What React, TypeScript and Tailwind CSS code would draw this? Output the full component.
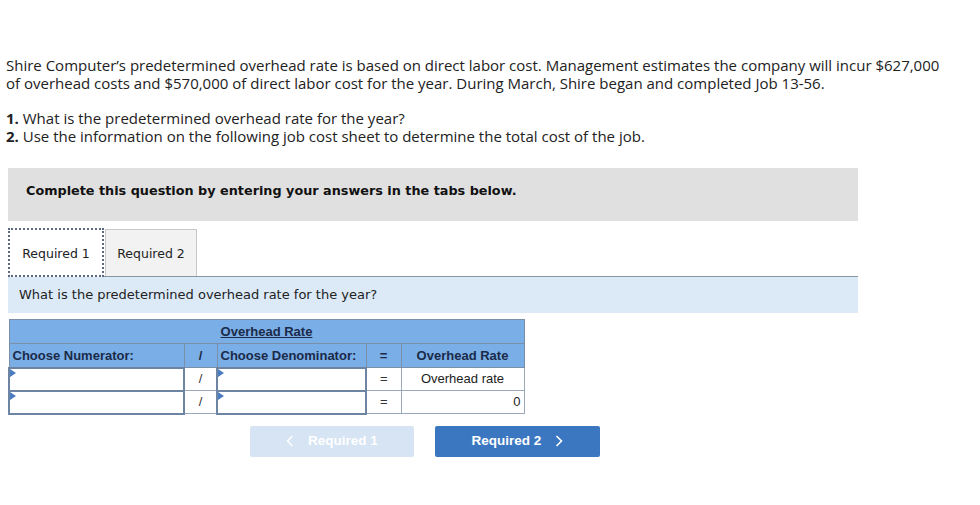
import React from 'react';

const InputCell: React.FC = () => (
  <td className="relative p-0 border-2 border-[#6d84a3] bg-white h-[23px]">
    <span className="absolute left-0 top-0 w-0 h-0 border-t-[4px] border-b-[4px] border-l-[6px] border-t-transparent border-b-transparent border-l-[#4a7cc0]" />
  </td>
);

const Chevron: React.FC<{ dir: 'left' | 'right' }> = ({ dir }) => (
  <svg width="8" height="12" viewBox="0 0 8 12" fill="none" stroke="currentColor" strokeWidth="1.6">
    {dir === 'left' ? <path d="M6.5 1 L1.5 6 L6.5 11" /> : <path d="M1.5 1 L6.5 6 L1.5 11" />}
  </svg>
);

export default function App() {
  return (
    <div className="w-[980px] h-[505px] bg-white relative overflow-hidden">
      <div className="pt-[56px] pl-[6px] text-[15px] leading-[18px] text-[#222]" style={{ fontFamily: '"Open Sans", sans-serif' }}>
        <p>
          Shire Computer’s predetermined overhead rate is based on direct labor cost. Management estimates the company will incur $627,000
          <br />
          of overhead costs and $570,000 of direct labor cost for the year. During March, Shire began and completed Job 13-56.
        </p>
        <p className="mt-[17px]">
          <b>1.</b> What is the predetermined overhead rate for the year?
          <br />
          <b>2.</b> Use the information on the following job cost sheet to determine the total cost of the job.
        </p>
      </div>

      <div className="ml-[8px] w-[850px] mt-[23px]" style={{ fontFamily: '"DejaVu Sans", Verdana, sans-serif' }}>
        <div className="h-[53px] bg-[#e0e0e0] flex items-center pl-[18px] pb-[8px] text-[12.8px] font-bold text-[#111]">
          Complete this question by entering your answers in the tabs below.
        </div>

        <div className="mt-[8px] flex items-end h-[48px] border-b border-[#8796a4]">
          <div className="w-[96px] h-[49px] -mb-px pt-[3px] bg-white border-2 border-dotted border-[#5b6a80] flex items-center justify-center text-[12.5px] text-[#222] z-10">
            Required 1
          </div>
          <div className="ml-[1px] w-[92px] h-[47px] pt-[2px] bg-[#f2f2f2] border border-b-0 border-[#c8c8c8] flex items-center justify-center text-[12.5px] text-[#222]">
            Required 2
          </div>
        </div>

        <div className="h-[36px] bg-[#dceaf8] flex items-center pl-[11px] text-[13px] text-[#222]">
          What is the predetermined overhead rate for the year?
        </div>
      </div>

      <table
        className="ml-[8px] mt-[6px] border-collapse text-[13px] text-[#1b2a48]"
        style={{ fontFamily: '"Liberation Sans", Arial, sans-serif' }}
      >
        <colgroup>
          <col className="w-[175px]" />
          <col className="w-[33px]" />
          <col className="w-[149px]" />
          <col className="w-[35px]" />
          <col className="w-[123px]" />
        </colgroup>
        <tbody>
          <tr className="h-[24px] bg-[#7aaee6]">
            <td colSpan={5} className="border border-[#7c8fa8] text-center font-bold underline">
              Overhead Rate
            </td>
          </tr>
          <tr className="h-[24px] bg-[#7aaee6] font-bold">
            <td className="border border-[#7c8fa8] pl-[3px]">Choose Numerator:</td>
            <td className="border border-[#7c8fa8] text-center">/</td>
            <td className="border border-[#7c8fa8] pl-[3px]">Choose Denominator:</td>
            <td className="border border-[#7c8fa8] text-center">=</td>
            <td className="border border-[#7c8fa8] text-center">Overhead Rate</td>
          </tr>
          <tr className="h-[23px]">
            <InputCell />
            <td className="border border-[#9aa8ba] text-center text-[#333]">/</td>
            <InputCell />
            <td className="border border-[#9aa8ba] text-center text-[#333]">=</td>
            <td className="border border-[#9aa8ba] text-center text-[#222]">Overhead rate</td>
          </tr>
          <tr className="h-[23px]">
            <InputCell />
            <td className="border border-[#9aa8ba] text-center text-[#333]">/</td>
            <InputCell />
            <td className="border border-[#9aa8ba] text-center text-[#333]">=</td>
            <td className="border border-[#9aa8ba] text-right pr-[3px] text-[#222]">0</td>
          </tr>
        </tbody>
      </table>

      <div className="mt-[11px] ml-[250px] flex gap-[21px]" style={{ fontFamily: '"Liberation Sans", Arial, sans-serif' }}>
        <button className="w-[164px] h-[31px] rounded-[2px] bg-[#d6e4f3] text-white font-bold text-[13.5px] flex items-center justify-center gap-[14px]">
          <Chevron dir="left" />
          Required 1
        </button>
        <button className="w-[165px] h-[31px] rounded-[2px] bg-[#3a77c0] text-white font-bold text-[13.5px] flex items-center justify-center gap-[14px]">
          Required 2
          <Chevron dir="right" />
        </button>
      </div>
    </div>
  );
}
